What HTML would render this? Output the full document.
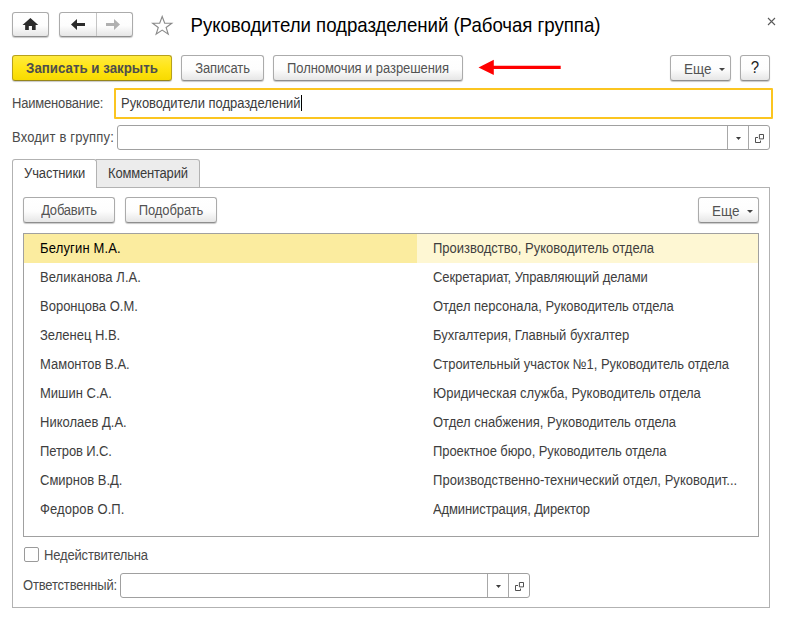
<!DOCTYPE html>
<html lang="ru">
<head>
<meta charset="utf-8">
<title>Руководители подразделений (Рабочая группа)</title>
<style>
html,body{margin:0;padding:0;background:#fff;}
body{width:789px;height:620px;position:relative;overflow:hidden;font-family:"Liberation Sans",sans-serif;font-size:13px;color:#4a4a4a;}
.abs{position:absolute;box-sizing:border-box;}
.btn{position:absolute;box-sizing:border-box;border:1px solid #ababab;border-bottom-color:#8e8e8e;border-radius:3px;background:linear-gradient(#ffffff,#fdfdfd 55%,#e6e6e6);box-shadow:0 1px 1px rgba(0,0,0,.22);text-align:center;white-space:nowrap;color:#535353;}
.btn span{position:absolute;left:0;right:0;text-align:center;transform:scaleY(1.08);transform-origin:0 12px;}
.lbl{position:absolute;white-space:nowrap;line-height:15px;transform:scaleY(1.08);transform-origin:0 12px;}
.inp{position:absolute;box-sizing:border-box;border:1px solid #a0a0a0;border-radius:3px;background:#fff;}
.row{position:absolute;left:24px;width:734px;height:29px;color:#3e3e3e;}
.row .c1{position:absolute;left:16px;top:7px;line-height:15px;white-space:nowrap;transform:scaleY(1.08);transform-origin:0 12px;}
.row .c2{position:absolute;left:409px;top:7px;line-height:15px;white-space:nowrap;transform:scaleY(1.08);transform-origin:0 12px;}
</style>
</head>
<body>

<!-- top nav -->
<div class="btn" style="left:12px;top:12px;width:37px;height:25px;">
<svg class="abs" style="left:9.2px;top:5px" width="16.8" height="12" viewBox="0 0 16 12" preserveAspectRatio="none"><path d="M8 0 L15.5 7 H13 V12 H9.5 V8 H6.5 V12 H3 V7 H0.5 Z" fill="#2b2b2b"/></svg>
</div>
<div class="btn" style="left:59px;top:12px;width:74px;height:25px;">
<div class="abs" style="left:36px;top:0;width:1px;height:23px;background:#c4c4c4"></div>
<svg class="abs" style="left:11px;top:6px" width="15" height="11" viewBox="0 0 15 11"><path d="M0 5.5 L6 0 V4 H14 V7 H6 V11 Z" fill="#2b2b2b"/></svg>
<svg class="abs" style="left:45px;top:6px" width="15" height="11" viewBox="0 0 15 11"><path d="M15 5.5 L9 0 V4 H1 V7 H9 V11 Z" fill="#b0b0b0"/></svg>
</div>
<svg class="abs" style="left:151.4px;top:15px" width="22.4" height="21.1" viewBox="0 0 24 23" preserveAspectRatio="none"><path d="M12 1.6 L14.7 9 H22.3 L16.2 13.6 L18.5 21 L12 16.5 L5.5 21 L7.8 13.6 L1.7 9 H9.3 Z" fill="#fff" stroke="#8a8a8a" stroke-width="1.2" stroke-linejoin="miter"/></svg>
<div class="lbl" style="left:190.5px;top:14px;font-size:18.67px;line-height:22px;color:#000;letter-spacing:-0.037px;transform:scaleY(1.04);transform-origin:0 4px;">Руководители подразделений (Рабочая группа)</div>
<svg class="abs" style="left:767px;top:17px" width="9" height="9" viewBox="0 0 9 9"><path d="M1 1 L8 8 M8 1 L1 8" stroke="#5a5a5a" stroke-width="1.1" fill="none"/></svg>

<!-- command bar -->
<div class="btn" style="left:12px;top:55px;width:160px;height:26px;border-color:#b7a11c;border-bottom-color:#96851a;background:linear-gradient(#ffea3e,#ffe515 50%,#f7da00);font-weight:bold;color:#4d4d4d;font-size:13.3px;"><span style="top:5px;line-height:15px;">Записать и закрыть</span></div>
<div class="btn" style="left:181px;top:55px;width:83px;height:26px;"><span style="top:5px;line-height:15px;letter-spacing:-0.12px;">Записать</span></div>
<div class="btn" style="left:273px;top:55px;width:190px;height:26px;"><span style="top:5px;line-height:15px;letter-spacing:-0.07px;">Полномочия и разрешения</span></div>
<svg class="abs" style="left:478px;top:59px" width="86" height="17" viewBox="0 0 86 17"><path d="M0.5 8.4 L15.8 0.8 V6.8 H82.7 V10.1 H15.8 V16 Z" fill="#ff0000"/></svg>
<div class="btn" style="left:670px;top:55px;width:61px;height:26px;"><span style="top:5.6px;line-height:16px;font-size:13.5px;left:-5.5px;">Еще</span>
<svg class="abs" style="left:48px;top:12px" width="6" height="3" viewBox="0 0 6 3"><path d="M0 0 H6 L3 3 Z" fill="#444"/></svg></div>
<div class="btn" style="left:740px;top:55px;width:30px;height:26px;"><span style="top:3.2px;line-height:18px;font-size:15px;color:#222;">?</span></div>

<!-- name -->
<div class="lbl" style="left:12px;top:96px;letter-spacing:-0.19px;">Наименование:</div>
<div class="inp" style="left:114px;top:88px;width:659px;height:31px;border:2px solid #fbc520;border-radius:1px;"></div>
<div class="lbl" style="left:121px;top:96px;color:#3c3c3c;letter-spacing:-0.03px;">Руководители подразделений</div>
<div class="abs" style="left:301px;top:95px;width:1px;height:16px;background:#000"></div>

<!-- group -->
<div class="lbl" style="left:12px;top:130px;letter-spacing:0.17px;">Входит в группу:</div>
<div class="inp" style="left:117px;top:125px;width:653px;height:25px;"></div>
<div class="abs" style="left:727px;top:126px;width:1px;height:23px;background:#a8a8a8"></div>
<div class="abs" style="left:748px;top:126px;width:1px;height:23px;background:#a8a8a8"></div>
<svg class="abs" style="left:736px;top:137px" width="5" height="3" viewBox="0 0 5 3"><path d="M0 0 H5 L2.5 3 Z" fill="#3c3c3c"/></svg>
<svg class="abs" style="left:755px;top:134px" width="9" height="9" viewBox="0 0 9 9"><path d="M4.4 0.5 H8.5 V4.9 H4.4 Z M3 3.5 H0.5 V8.5 H5.5 V6.6" fill="none" stroke="#3c3c3c" stroke-width="0.9"/></svg>

<!-- tabs -->
<div class="abs" style="left:12px;top:187px;width:758px;height:421px;border:1px solid #b2b2b2;"></div>
<div class="abs" style="left:96px;top:159px;width:104px;height:29px;border:1px solid #b2b2b2;border-left:none;background:#ececec;border-radius:0 3px 0 0;"></div>
<div class="abs" style="left:12px;top:159px;width:85px;height:29px;border:1px solid #b2b2b2;border-bottom:none;background:#fff;border-radius:3px 3px 0 0;"></div>
<div class="lbl" style="left:24px;top:166px;letter-spacing:-0.09px;color:#3a3a3a;">Участники</div>
<div class="lbl" style="left:108px;top:166px;letter-spacing:-0.19px;color:#3a3a3a;">Комментарий</div>

<!-- tab toolbar -->
<div class="btn" style="left:23px;top:197px;width:92px;height:26px;"><span style="top:5px;line-height:15px;letter-spacing:-0.22px;">Добавить</span></div>
<div class="btn" style="left:125px;top:197px;width:92px;height:26px;"><span style="top:5px;line-height:15px;letter-spacing:-0.11px;">Подобрать</span></div>
<div class="btn" style="left:698px;top:197px;width:61px;height:26px;"><span style="top:5.6px;line-height:16px;font-size:13.5px;left:-5.5px;">Еще</span>
<svg class="abs" style="left:48px;top:12px" width="6" height="3" viewBox="0 0 6 3"><path d="M0 0 H6 L3 3 Z" fill="#444"/></svg></div>

<!-- table -->
<div class="abs" style="left:23px;top:233px;width:736px;height:304px;border:1px solid #a0a0a0;background:#fff;"></div>
<div class="abs" style="left:24px;top:234px;width:393px;height:29px;background:#fbec9f;"></div>
<div class="abs" style="left:417px;top:234px;width:341px;height:29px;background:#fef7d3;"></div>

<div class="row" style="top:234px"><div class="c1" style="color:#000;letter-spacing:0.16px">Белугин М.А.</div><div class="c2">Производство, Руководитель отдела</div></div>
<div class="row" style="top:263px"><div class="c1" style="letter-spacing:0.07px">Великанова Л.А.</div><div class="c2" style="letter-spacing:-0.07px">Секретариат, Управляющий делами</div></div>
<div class="row" style="top:292px"><div class="c1">Воронцова О.М.</div><div class="c2" style="letter-spacing:-0.035px">Отдел персонала, Руководитель отдела</div></div>
<div class="row" style="top:321px"><div class="c1">Зеленец Н.В.</div><div class="c2" style="letter-spacing:-0.04px">Бухгалтерия, Главный бухгалтер</div></div>
<div class="row" style="top:350px"><div class="c1">Мамонтов В.А.</div><div class="c2" style="letter-spacing:-0.05px">Строительный участок №1, Руководитель отдела</div></div>
<div class="row" style="top:379px"><div class="c1">Мишин С.А.</div><div class="c2" style="letter-spacing:0.02px">Юридическая служба, Руководитель отдела</div></div>
<div class="row" style="top:408px"><div class="c1">Николаев Д.А.</div><div class="c2">Отдел снабжения, Руководитель отдела</div></div>
<div class="row" style="top:437px"><div class="c1" style="letter-spacing:-0.11px">Петров И.С.</div><div class="c2" style="letter-spacing:-0.075px">Проектное бюро, Руководитель отдела</div></div>
<div class="row" style="top:466px"><div class="c1">Смирнов В.Д.</div><div class="c2" style="letter-spacing:0.037px">Производственно-технический отдел, Руководит...</div></div>
<div class="row" style="top:495px"><div class="c1" style="letter-spacing:0.1px">Федоров О.П.</div><div class="c2" style="letter-spacing:-0.11px">Администрация, Директор</div></div>

<!-- bottom -->
<div class="abs" style="left:24px;top:547px;width:15px;height:15px;border:1px solid #9a9a9a;border-radius:2px;background:#fff;"></div>
<div class="lbl" style="left:44px;top:548px;letter-spacing:-0.17px;">Недействительна</div>
<div class="lbl" style="left:23px;top:578px;letter-spacing:-0.18px;">Ответственный:</div>
<div class="inp" style="left:120px;top:573px;width:410px;height:25px;"></div>
<div class="abs" style="left:487px;top:574px;width:1px;height:23px;background:#a8a8a8"></div>
<div class="abs" style="left:508px;top:574px;width:1px;height:23px;background:#a8a8a8"></div>
<svg class="abs" style="left:496px;top:585px" width="5" height="3" viewBox="0 0 5 3"><path d="M0 0 H5 L2.5 3 Z" fill="#3c3c3c"/></svg>
<svg class="abs" style="left:515px;top:582px" width="9" height="9" viewBox="0 0 9 9"><path d="M4.4 0.5 H8.5 V4.9 H4.4 Z M3 3.5 H0.5 V8.5 H5.5 V6.6" fill="none" stroke="#3c3c3c" stroke-width="0.9"/></svg>

</body>
</html>
